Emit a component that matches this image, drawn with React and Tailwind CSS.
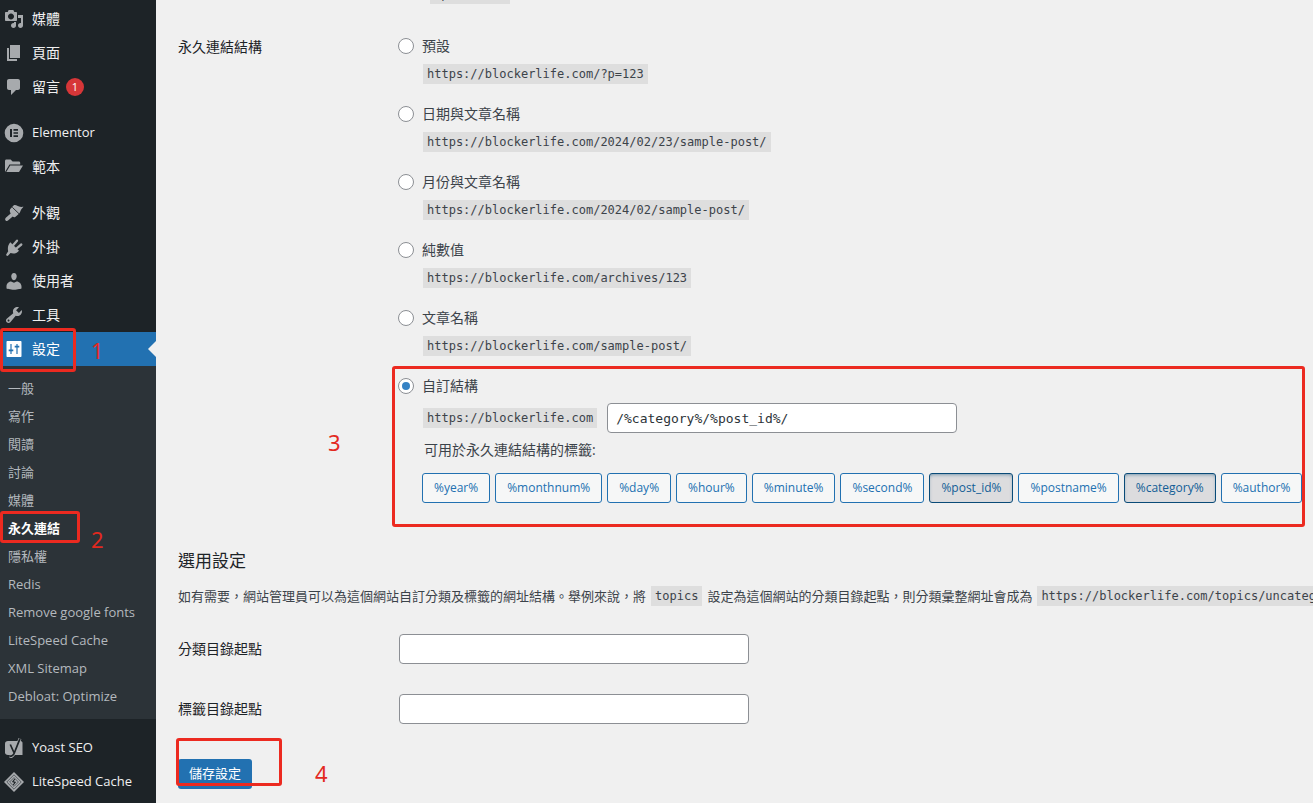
import { useState } from 'react'

const SITE = 'https://blockerlife.com'

const structures = [
    { id: 'plain', label: '預設', example: SITE + '/?p=123' },
    { id: 'day', label: '日期與文章名稱', example: SITE + '/2024/02/23/sample-post/' },
    { id: 'month', label: '月份與文章名稱', example: SITE + '/2024/02/sample-post/' },
    { id: 'numeric', label: '純數值', example: SITE + '/archives/123' },
    { id: 'postname', label: '文章名稱', example: SITE + '/sample-post/' },
]

const tags = ['year', 'monthnum', 'day', 'hour', 'minute', 'second', 'post_id', 'postname', 'category', 'author']

const settingsPages = [
    '一般', '寫作', '閱讀', '討論', '媒體', '永久連結', '隱私權', 'Redis',
    'Remove google fonts', 'LiteSpeed Cache', 'XML Sitemap', 'Debloat: Optimize',
]

const icons = {
    media: <path d="M13 11V4c0-.55-.45-1-1-1h-1.67l-1-2H4.67l-1 2H2c-.55 0-1 .45-1 1v7c0 .55.45 1 1 1h10c.55 0 1-.45 1-1zM7 4.5c1.66 0 3 1.34 3 3s-1.34 3-3 3-3-1.34-3-3 1.34-3 3-3zM14 6h5v10.5c0 1.38-1.12 2.5-2.5 2.5S14 17.88 14 16.5s1.12-2.5 2.5-2.5c.17 0 .34.02.5.05V9h-3V6zm-4 8.05V13h2v3.5c0 1.38-1.12 2.5-2.5 2.5S7 17.88 7 16.5 8.12 14 9.5 14c.17 0 .34.02.5.05z" />,
    page: <path d="M6 15V2h10v13H6zm-1 1h8v2H3V5h2v11z" />,
    comment: <path d="M5 2h9c1.1 0 2 .9 2 2v7c0 1.1-.9 2-2 2h-2l-5 5v-5H5c-1.1 0-2-.9-2-2V4c0-1.1.9-2 2-2z" />,
    elementor: <path fillRule="evenodd" d="M10 .7a9.3 9.3 0 1 0 0 18.6A9.3 9.3 0 0 0 10 .7zM6 6h2v8H6V6zm3.5 0H14v1.7H9.5V6zm0 3.150H14v1.7H9.5v-1.7zm0 3.150H14V14H9.5v-1.7z" />,
    folder: <path d="M1 15V4c0-.8.6-1.5 1.4-1.5h4.2l2 2h6.2c.8 0 1.4.6 1.4 1.4V7.5H5.5L1 15zM6.2 8.5H19l-4 6.5H2.3l3.9-6.5z" />,
    brush: (
        <>
            <path d="M6.3 6 9.8 2.3c1.6-.9 3.3.2 4.7 1 1.4.7 3 .8 5 .5-1.6 1.6-2.6 3-3.2 4.6-.5 1.5-1.3 2.4-2.4 3.3l-2.700 2.400c-.9.5-1.800 0-2.500-.5L4.300 17.300c-.8.8-2 .8-2.700.1-.7-.7-.6-1.900.2-2.700L6.700 10.500C6 9 5.200 7.500 6.300 6z" />
            <path d="M8.300 4.300l6.800 6.500" fill="none" stroke="#1d2327" strokeWidth=".9" />
        </>
    ),
    plugin: (
        <>
            <path d="M6.300 5.300l8.700 8.400c-2.300 2.800-5.600 3.500-8.500 2.400l-2.300 2.500c-.5.5-1.200.5-1.700 0-.5-.5-.5-1.200 0-1.700l1.700-2.600c-.8-3.200-.2-6.400 2.100-9z" />
            <path d="M9.300 8l3.700-4.300M12.700 11.300 17.300 7.500" fill="none" stroke="#a7aaad" strokeWidth="2.300" strokeLinecap="round" />
        </>
    ),
    user: <path d="M10 9.250c-2.270 0-2.730-3.440-2.730-3.440C7 4.020 8.090 2 9.980 2c1.900 0 3 2.020 2.720 3.810 0 0-.43 3.440-2.700 3.440zm0 2.570 2.620-1.320c2.690 0 4.880 2.460 4.880 4.970v2.030s-3.950 1.220-7.500 1.220c-3.610 0-7.500-1.220-7.500-1.220v-2.030c0-2.570 1.950-4.920 4.510-4.920L10 11.820z" />,
    wrench: <path d="M16.680 9.770c-1.340 1.340-3.300 1.670-4.950.99l-5.410 6.520c-.99.99-2.590.99-3.580 0s-.99-2.590 0-3.570l6.520-5.420c-.68-1.650-.35-3.610.99-4.950 1.280-1.280 3.120-1.620 4.720-1.060l-2.890 2.890 2.820 2.820 2.860-2.870c.53 1.580.18 3.390-1.080 4.650zM3.810 16.210c.4.39 1.040.39 1.430 0 .4-.4.4-1.040 0-1.430-.39-.4-1.030-.4-1.430 0-.39.39-.39 1.030 0 1.430z" />,
    sliders: <path fillRule="evenodd" d="M3.5 2h13c.6 0 1 .4 1 1v14c0 .6-.4 1-1 1h-13c-.6 0-1-.4-1-1V3c0-.6.4-1 1-1zm2.9 3v5.5H4.7v1.8h1.7V15h1.2v-2.7h1.7v-1.8H7.6V5H6.4zm6 0v1.7h-1.7v1.8h1.7V15h1.2V8.5h1.7V6.7h-1.7V5h-1.2z" />,
    yoast: (
        <>
            <path d="M4 3h12.5c1.3 0 2 1 2 2v12H4c-1.8 0-3-1-3-2.8V5.8C1 4 2.2 3 4 3z" />
            <path d="M16 .6 10.5 14.5C9.6 17 8.4 19 5.5 19" fill="none" stroke="#a7aaad" strokeWidth="3" />
            <path d="M16 .6 10.5 14.5C9.7 16.8 8.4 18.3 5.5 18.4M6.3 6.5l3.6 8" fill="none" stroke="#1d2327" strokeWidth="1.7" />
        </>
    ),
    litespeed: (
        <>
            <path d="M10 0l10 10-10 10L0 10z" />
            <path d="M10 2.8l7.2 7.2-7.2 7.2L2.8 10zM10 5.6l4.4 4.4-4.4 4.4L5.6 10z" fill="none" stroke="#50565b" strokeWidth=".9" />
            <path d="M10.8 7l-2 2.6 2.4.8-2 2.6" fill="none" stroke="#1d2327" strokeWidth="1.1" />
        </>
    ),
}

const menuGroups = [
    [
        { label: '媒體', icon: 'media' },
        { label: '頁面', icon: 'page' },
        { label: '留言', icon: 'comment', count: 1 },
    ],
    [
        { label: 'Elementor', icon: 'elementor', latin: true },
        { label: '範本', icon: 'folder' },
    ],
    [
        { label: '外觀', icon: 'brush' },
        { label: '外掛', icon: 'plugin' },
        { label: '使用者', icon: 'user' },
        { label: '工具', icon: 'wrench' },
        { label: '設定', icon: 'sliders', current: true },
    ],
    [
        { label: 'Yoast SEO', icon: 'yoast', latin: true },
        { label: 'LiteSpeed Cache', icon: 'litespeed', latin: true },
    ],
]

function Code({ children }) {
    return (
        <code className="inline-block h-5 shrink-0 bg-[#dedede] px-1 font-['DejaVu_Sans_Mono',monospace] text-xs leading-5 text-[#3c434a]">
            {children}
        </code>
    )
}

// red frame with its step number
function Step({ number, frame, digit }) {
    return (
        <>
            <span className={'pointer-events-none absolute z-10 rounded-[3px] border-3 border-[#ec2a20] ' + frame} />
            <span className={"pointer-events-none absolute z-10 font-['Noto_Sans',sans-serif] text-[22px] leading-6 text-[#e3291f] " + digit}>{number}</span>
        </>
    )
}

function MenuItem({ item }) {
    return (
        <li className="relative">
            <a href="#" className={'flex h-[34px] items-center gap-2 pl-1 ' + (item.current ? 'bg-[#2271b1] text-white' : 'text-[#f0f0f1]')}>
                <svg viewBox="0 0 20 20" className={'size-5 shrink-0 ' + (item.current ? 'fill-white' : 'fill-[#a7aaad]')}>
                    {icons[item.icon]}
                </svg>
                <span className={'whitespace-nowrap ' + (item.latin ? 'text-[13px]' : 'text-sm')}>{item.label}</span>
                {item.count && (
                    <span className="-ml-[2px] flex size-[18px] items-center justify-center rounded-full bg-[#d63638] text-[11px] text-white">{item.count}</span>
                )}
            </a>
            {item.current && (
                <>
                    <span className="absolute top-[9px] right-0 border-8 border-l-0 border-transparent border-r-[#f0f0f0]" />
                    <Step number="1" frame="-top-1 left-0 h-11 w-[76px]" digit="top-[6px] left-[91px]" />
                </>
            )}
        </li>
    )
}

function Sidebar() {
    return (
        <nav className="w-[156px] shrink-0 bg-[#1d2327] pt-[2px]">
            {menuGroups.map((group, index) => (
                <div key={index} className="mb-3">
                    <ul>
                        {group.map((item) => <MenuItem key={item.label} item={item} />)}
                    </ul>
                    {group.some((item) => item.current) && (
                        <ul className="bg-[#2c3338] pt-[9px] pb-2 text-[13px] text-[#b4b9be]">
                            {settingsPages.map((page) => (
                                <li key={page} className="relative">
                                    <a href="#" className={'flex h-7 items-center pl-2 whitespace-nowrap ' + (page === '永久連結' ? 'font-semibold text-white' : '')}>
                                        {page}
                                    </a>
                                    {page === '永久連結' && (
                                        <Step number="2" frame="-top-1 left-0 h-8 w-20" digit="top-3 left-[91px]" />
                                    )}
                                </li>
                            ))}
                        </ul>
                    )}
                </div>
            ))}
        </nav>
    )
}

function Radio({ id, label, selected, onSelect }) {
    return (
        <div className="flex h-5 items-center gap-2">
            <input
                type="radio"
                name="selection"
                id={id}
                checked={selected === id}
                onChange={() => onSelect(id)}
                className="grid size-4 shrink-0 appearance-none place-items-center rounded-full border border-[#8c8f94] bg-white before:size-2 before:rounded-full checked:before:bg-[#3582c4]"
            />
            <label htmlFor={id} className="text-sm">{label}</label>
        </div>
    )
}

function BaseField({ id, label }) {
    return (
        <div className="flex h-[30px] items-center">
            <label htmlFor={id} className="w-[221px] shrink-0 text-sm text-[#1d2327]">{label}</label>
            <input id={id} type="text" className="h-[30px] w-[350px] rounded-sm border border-[#8c8f94] bg-white px-2 text-sm" />
        </div>
    )
}

function App() {
    const [selected, setSelected] = useState('custom')
    const [structure, setStructure] = useState('/%category%/%post_id%/')

    function toggleTag(tag) {
        const part = '%' + tag + '%/'
        setSelected('custom')
        setStructure(structure.includes('/' + part) ? structure.replace(part, '') : structure + part)
    }

    return (
        <div lang="zh-TW" className="flex min-h-screen bg-[#f0f0f0] font-['Open_Sans','Noto_Sans_CJK_TC',sans-serif] text-[#3c434a]">
            <Sidebar />
            <main className="min-w-0 flex-1 overflow-hidden pl-[22px]">
                <p className="-mt-4 flex pl-[252px]"><Code>%postname%</Code></p>
                <form onSubmit={(e) => e.preventDefault()}>
                    <div className="mt-8 flex">
                        <div className="w-[220px] shrink-0 text-sm leading-[22px] text-[#1d2327]">永久連結結構</div>
                        <div role="radiogroup" aria-label="永久連結結構" className="min-w-0 flex-1">
                            {structures.map((s) => (
                                <div key={s.id} className="mb-5">
                                    <Radio id={s.id} label={s.label} selected={selected} onSelect={setSelected} />
                                    <div className="mt-2 flex pl-[25px]"><Code>{s.example}</Code></div>
                                </div>
                            ))}
                            <div className="relative">
                                <Step number="3" frame="-top-[10px] -left-[6px] right-2 h-[161px]" digit="top-[54px] -left-[70px]" />
                                <Radio id="custom" label="自訂結構" selected={selected} onSelect={setSelected} />
                                <div className="mt-[7px] flex items-center gap-[10px] pl-[25px]">
                                    <Code>{SITE}</Code>
                                    <input
                                        type="text"
                                        aria-label="自訂結構"
                                        value={structure}
                                        onChange={(e) => setStructure(e.target.value)}
                                        className="h-[30px] w-[350px] rounded-sm border border-[#8c8f94] bg-white px-2 font-['DejaVu_Sans_Mono',monospace] text-[13px] text-[#2c3338]"
                                    />
                                </div>
                                <p className="mt-[7px] pl-[26px] text-sm">可用於永久連結結構的標籤:</p>
                                <div className="mt-[13px] flex gap-[5px] pl-6">
                                    {tags.map((tag) => (
                                        <button
                                            key={tag}
                                            type="button"
                                            onClick={() => toggleTag(tag)}
                                            className={'h-[30px] shrink-0 rounded-[3px] border px-[11px] text-xs whitespace-nowrap ' + (structure.includes('/%' + tag + '%/')
                                                ? 'border-[#0a4b78] bg-[#dcdcde] text-[#135e96] shadow-[inset_0_2px_5px_-3px_#0a4b78]'
                                                : 'border-[#2271b1] bg-[#f6f7f7] text-[#2271b1]')}
                                        >
                                            %{tag}%
                                        </button>
                                    ))}
                                </div>
                            </div>
                        </div>
                    </div>
                    <h2 className="mt-11 text-[17px] leading-7 text-[#1d2327]">選用設定</h2>
                    <p className="mt-[11px] flex items-center gap-[5px] text-[13px] leading-5 whitespace-nowrap">
                        如有需要，網站管理員可以為這個網站自訂分類及標籤的網址結構。舉例來說，將
                        <Code>topics</Code>
                        設定為這個網站的分類目錄起點，則分類彙整網址會成為
                        <Code>{SITE}/topics/uncategorized/</Code>
                    </p>
                    <div className="mt-7 flex flex-col gap-[30px]">
                        <BaseField id="category_base" label="分類目錄起點" />
                        <BaseField id="tag_base" label="標籤目錄起點" />
                    </div>
                    <div className="relative mt-[35px]">
                        <button type="submit" className="h-[30px] rounded-[3px] bg-[#2271b1] px-[11px] text-[13px] text-white">儲存設定</button>
                        <Step number="4" frame="-top-[21px] -left-[2px] h-12 w-[106px]" digit="top-[2px] left-[137px]" />
                    </div>
                </form>
            </main>
        </div>
    )
}

export default App
